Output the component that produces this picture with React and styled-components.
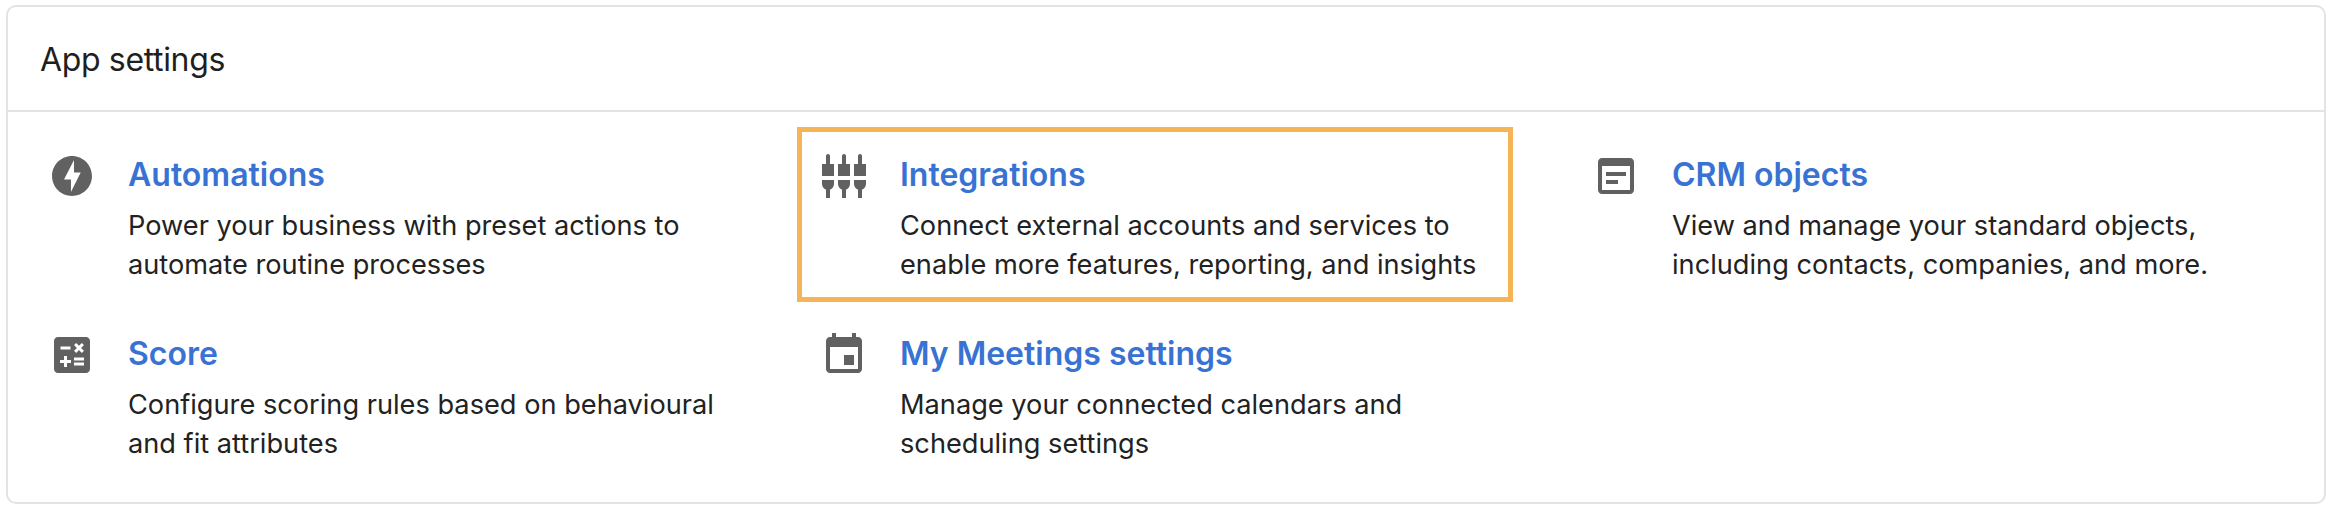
import React from 'react';
import styled, { createGlobalStyle } from 'styled-components';

const Global = createGlobalStyle`
  html, body { margin: 0; padding: 0; background: #fff; }
  body { font-family: Inter, "Liberation Sans", sans-serif; color: #1f1f1f; }
`;

const paths = {
  bolt: 'M12 2.02c-5.51 0-9.98 4.47-9.98 9.98s4.47 9.98 9.98 9.98 9.98-4.47 9.98-9.98S17.51 2.02 12 2.02zM11.48 20v-6.26H8L13 4v6.26h3.35L11.48 20z',
  plugs: 'M5 2c0-.55-.45-1-1-1s-1 .45-1 1v4H1v6h6V6H5V2zm4 14c0 1.3.84 2.4 2 2.82V23h2v-4.18c1.16-.41 2-1.51 2-2.82v-2H9v2zm-8 0c0 1.3.84 2.4 2 2.82V23h2v-4.18C6.16 18.4 7 17.3 7 16v-2H1v2zM21 6V2c0-.55-.45-1-1-1s-1 .45-1 1v4h-2v6h6V6h-2zm-8-4c0-.55-.45-1-1-1s-1 .45-1 1v4H9v6h6V6h-2V2zm4 14c0 1.3.84 2.4 2 2.82V23h2v-4.18c1.16-.41 2-1.51 2-2.82v-2h-6v2z',
  object: 'M19 3H5c-1.1 0-2 .9-2 2v14c0 1.1.9 2 2 2h14c1.1 0 2-.9 2-2V5c0-1.1-.9-2-2-2zm0 16H5V7h14v12zM7 10h10v2H7zM7 14h6v2H7z',
  calc: 'M19 3H5c-1.1 0-2 .9-2 2v14c0 1.1.9 2 2 2h14c1.1 0 2-.9 2-2V5c0-1.1-.9-2-2-2zm-5.97 4.06L14.09 6l1.41 1.41L16.91 6l1.06 1.06-1.41 1.41 1.41 1.41-1.06 1.06-1.41-1.4-1.41 1.41-1.06-1.06 1.41-1.41-1.41-1.42zm-6.78.66h5v1.5h-5v-1.5zM11.5 16h-2v2H8v-2H6v-1.5h2v-2h1.5v2h2V16zm6.5 1.25h-5v-1.5h5v1.5zm0-2.5h-5v-1.5h5v1.5z',
  event: 'M19 3h-1V1h-2v2H8V1H6v2H5c-1.11 0-1.99.9-1.99 2L3 19c0 1.1.89 2 2 2h14c1.1 0 2-.9 2-2V5c0-1.1-.9-2-2-2zm0 16H5V8h14v11zM17 12h-5v5h5v-5z',
};

const items = [
  { icon: 'bolt', title: 'Automations', lines: ['Power your business with preset actions to', 'automate routine processes'] },
  { icon: 'plugs', title: 'Integrations', lines: ['Connect external accounts and services to', 'enable more features, reporting, and insights'], highlight: true },
  { icon: 'object', title: 'CRM objects', lines: ['View and manage your standard objects,', 'including contacts, companies, and more.'] },
  { icon: 'calc', title: 'Score', lines: ['Configure scoring rules based on behavioural', 'and fit attributes'] },
  { icon: 'event', title: 'My Meetings settings', lines: ['Manage your connected calendars and', 'scheduling settings'] },
];

function App() {
  return (
    <>
      <Global />
      <Card>
        <Header>App settings</Header>
        <Grid>
          {items.map((item) => (
            <Item key={item.title}>
              {item.highlight && <Highlight />}
              <Icon viewBox="0 0 24 24"><path d={paths[item.icon]} /></Icon>
              <div>
                <Title href="#">{item.title}</Title>
                <Desc>
                  {item.lines.map((line) => <span key={line}>{line}</span>)}
                </Desc>
              </div>
            </Item>
          ))}
        </Grid>
      </Card>
    </>
  );
}

export default App;

const Card = styled.div`
  box-sizing: border-box;
  width: 2320px;
  height: 499px;
  margin: 5px 0 0 6px;
  border: 2px solid #e3e3e3;
  border-radius: 10px;
  background: #fff;
`;

const Header = styled.div`
  box-sizing: border-box;
  height: 105px;
  padding: 2px 0 0 32px;
  display: flex;
  align-items: center;
  border-bottom: 2px solid #e3e3e3;
  font-size: 32px;
  letter-spacing: -0.35px;
`;

const Grid = styled.div`
  display: grid;
  grid-template-columns: repeat(3, 772px);
  grid-auto-rows: 179px;
  padding: 40px 0 0 40px;
`;

const Item = styled.div`
  position: relative;
  display: flex;
  gap: 32px;
`;

const Highlight = styled.div`
  position: absolute;
  box-sizing: border-box;
  left: -23px;
  top: -25px;
  width: 716px;
  height: 175px;
  border: 5px solid #f5b556;
  pointer-events: none;
`;

const Icon = styled.svg`
  width: 48px;
  height: 48px;
  flex: none;
  fill: #616161;
`;

const Title = styled.a`
  display: block;
  height: 48px;
  line-height: 46px;
  font-size: 32px;
  font-weight: 600;
  color: #3872d3;
  text-decoration: none;
`;

const Desc = styled.p`
  margin: 6px 0 0;
  font-size: 27.2px;
  line-height: 39px;
  color: #222;

  > span { display: block; white-space: nowrap; }
`;
